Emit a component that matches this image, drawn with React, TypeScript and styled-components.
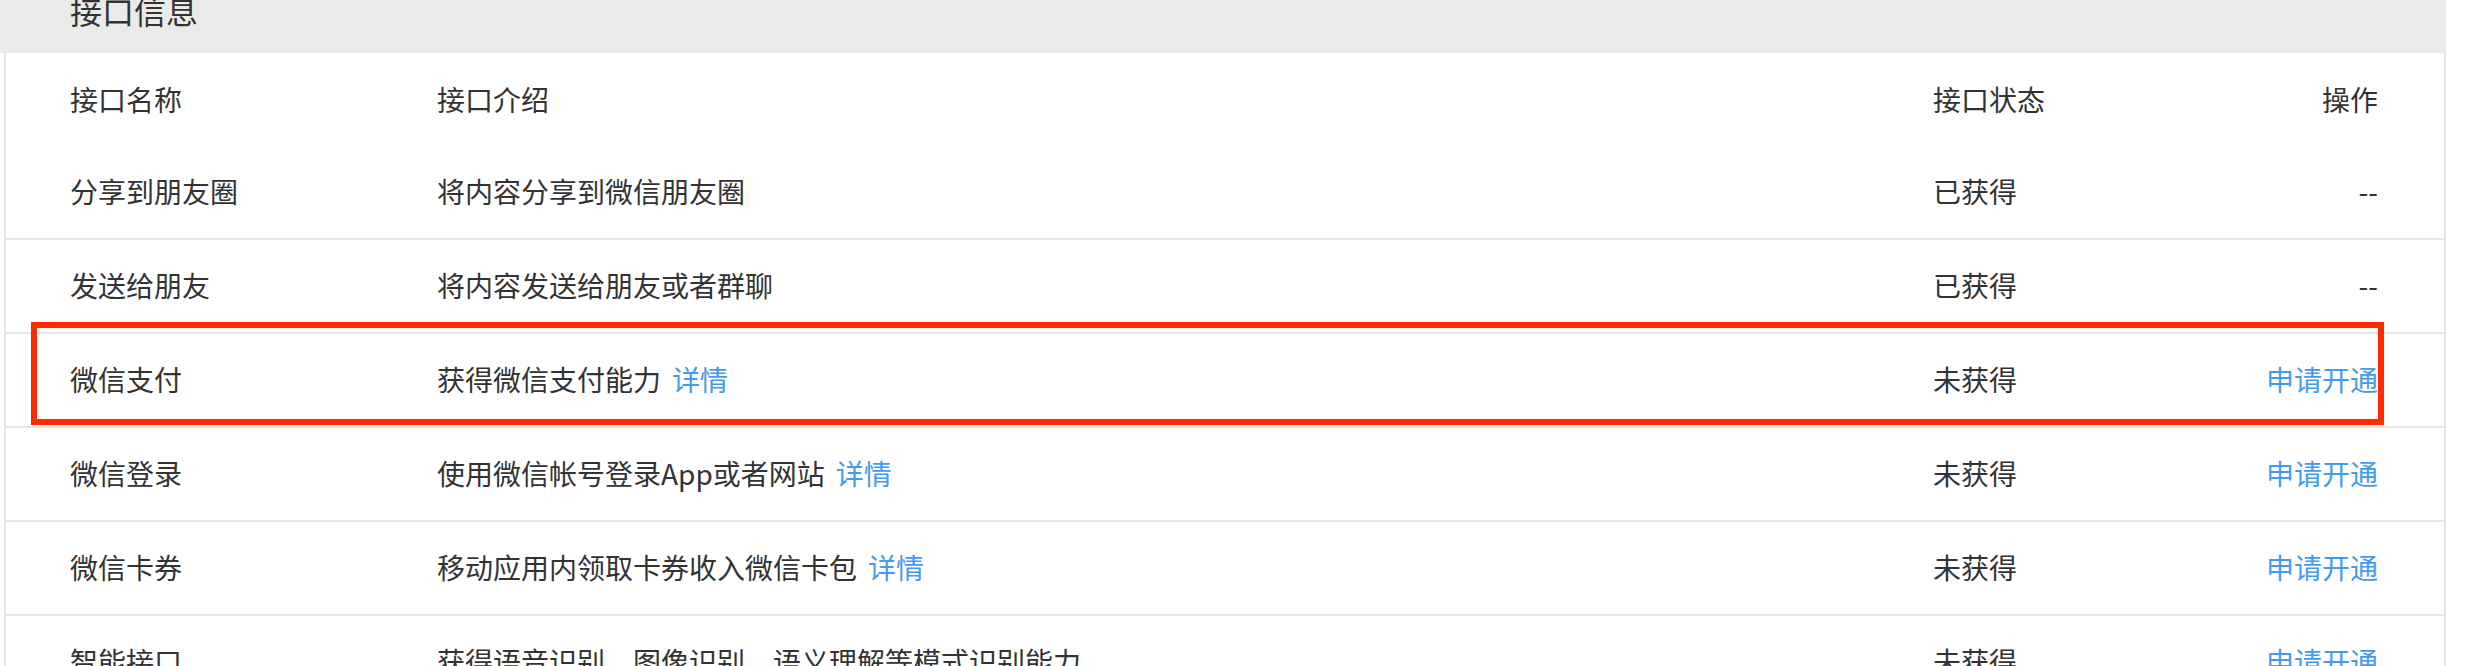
import React from "react";
import styled, { createGlobalStyle } from "styled-components";

const GlobalStyle = createGlobalStyle`
  html, body {
    margin: 0;
    padding: 0;
    background: #ffffff;
    overflow: hidden;
  }
  body {
    font-family: "Noto Sans CJK SC", "Noto Sans", sans-serif;
    color: #333333;
  }
`;

const Wrapper = styled.div`
  width: 2446px;
`;

const Band = styled.div`
  height: 53px;
  background: #eaeaea;
  display: flex;
  align-items: flex-start;
  padding-left: 70px;
  overflow: hidden;
`;

const BandTitle = styled.h2`
  margin: -6px 0 0 0;
  font-size: 32px;
  line-height: 32px;
  font-weight: 400;
  color: #333333;
`;

const Panel = styled.div`
  margin-left: 4px;
  border-left: 2px solid #e5e5e5;
  border-right: 2px solid #e5e5e5;
`;

const Row = styled.div<{ $head?: boolean; $divider?: boolean }>`
  position: relative;
  display: grid;
  grid-template-columns: 367px 1496px 1fr auto;
  align-items: center;
  box-sizing: border-box;
  height: ${(p) => (p.$head ? "93px" : "94px")};
  padding: 0 66px 2px 64px;
  border-bottom: ${(p) => (p.$divider ? "2px solid #e5e5e5" : "none")};
  font-size: 28px;
  line-height: 28px;
`;

const Cell = styled.div<{ $right?: boolean }>`
  white-space: nowrap;
  text-align: ${(p) => (p.$right ? "right" : "left")};
`;

const Link = styled.a`
  color: #439bf0;
  text-decoration: none;
  cursor: pointer;
`;

const DetailLink = styled(Link)`
  margin-left: 11px;
`;

const Highlight = styled.div`
  position: absolute;
  top: -12px;
  bottom: 1px;
  left: 25px;
  right: 60px;
  border: 6px solid #ff2a00;
  pointer-events: none;
  z-index: 2;
`;

type Api = {
  name: string;
  desc: string;
  detail?: boolean;
  obtained: boolean;
  highlighted?: boolean;
};

const apis: Api[] = [
  { name: "分享到朋友圈", desc: "将内容分享到微信朋友圈", obtained: true },
  { name: "发送给朋友", desc: "将内容发送给朋友或者群聊", obtained: true },
  { name: "微信支付", desc: "获得微信支付能力", detail: true, obtained: false, highlighted: true },
  { name: "微信登录", desc: "使用微信帐号登录App或者网站", detail: true, obtained: false },
  { name: "微信卡券", desc: "移动应用内领取卡券收入微信卡包", detail: true, obtained: false },
  { name: "智能接口", desc: "获得语音识别、图像识别、语义理解等模式识别能力", obtained: false },
];

export default function App() {
  return (
    <Wrapper>
      <GlobalStyle />
      <Band>
        <BandTitle>接口信息</BandTitle>
      </Band>
      <Panel>
        <Row $head>
          <Cell>接口名称</Cell>
          <Cell>接口介绍</Cell>
          <Cell>接口状态</Cell>
          <Cell $right>操作</Cell>
        </Row>
        {apis.map((api) => (
          <Row key={api.name} $divider>
            <Cell>{api.name}</Cell>
            <Cell>
              {api.desc}
              {api.detail && <DetailLink>详情</DetailLink>}
            </Cell>
            <Cell>{api.obtained ? "已获得" : "未获得"}</Cell>
            <Cell $right>{api.obtained ? "--" : <Link>申请开通</Link>}</Cell>
            {api.highlighted && <Highlight />}
          </Row>
        ))}
      </Panel>
    </Wrapper>
  );
}
